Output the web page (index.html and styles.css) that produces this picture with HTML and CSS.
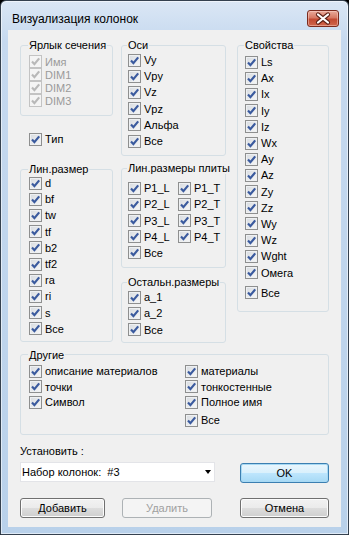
FILE: index.html
```html
<!DOCTYPE html>
<html>
<head>
    <title>Визуализация колонок</title>
    <link rel="stylesheet" href="styles.css">
</head>
<body>
    <svg width="0" height="0" class="defs">
        <symbol id="tick" viewBox="0 0 11 11">
            <path d="M2 5.6 L4.4 8.2 L9.2 2.4" fill="none" stroke="currentColor" stroke-width="2.2"/>
        </symbol>
    </svg>

    <div class="window">
        <div class="titlebar">
            <span class="title">Визуализация колонок</span>
            <span class="close">
                <svg width="30" height="15" viewBox="0 0 30 15">
                    <path d="M10 3.5 L20 11.5 M20 3.5 L10 11.5" stroke="#5b2016" stroke-width="4.2" stroke-linecap="round"/>
                    <path d="M10 3.5 L20 11.5 M20 3.5 L10 11.5" stroke="#fff" stroke-width="2.2" stroke-linecap="round"/>
                </svg>
            </span>
        </div>

        <div class="client">
            <div class="columns">
                <div class="col col1">
                    <fieldset class="grp g-label">
                        <legend>Ярлык сечения</legend>
                        <div class="cb small off"><span class="box"><svg><use href="#tick"/></svg></span>Имя</div>
                        <div class="cb small off"><span class="box"><svg><use href="#tick"/></svg></span>DIM1</div>
                        <div class="cb small off"><span class="box"><svg><use href="#tick"/></svg></span>DIM2</div>
                        <div class="cb small off"><span class="box"><svg><use href="#tick"/></svg></span>DIM3</div>
                    </fieldset>

                    <div class="cb tip"><span class="box"><svg><use href="#tick"/></svg></span>Тип</div>

                    <fieldset class="grp g-lin">
                        <legend>Лин.размер</legend>
                        <div class="cb"><span class="box"><svg><use href="#tick"/></svg></span>d</div>
                        <div class="cb"><span class="box"><svg><use href="#tick"/></svg></span>bf</div>
                        <div class="cb"><span class="box"><svg><use href="#tick"/></svg></span>tw</div>
                        <div class="cb"><span class="box"><svg><use href="#tick"/></svg></span>tf</div>
                        <div class="cb"><span class="box"><svg><use href="#tick"/></svg></span>b2</div>
                        <div class="cb"><span class="box"><svg><use href="#tick"/></svg></span>tf2</div>
                        <div class="cb"><span class="box"><svg><use href="#tick"/></svg></span>ra</div>
                        <div class="cb"><span class="box"><svg><use href="#tick"/></svg></span>ri</div>
                        <div class="cb"><span class="box"><svg><use href="#tick"/></svg></span>s</div>
                        <div class="cb"><span class="box"><svg><use href="#tick"/></svg></span>Все</div>
                    </fieldset>
                </div>

                <div class="col col2">
                    <fieldset class="grp g-axes">
                        <legend>Оси</legend>
                        <div class="cb"><span class="box"><svg><use href="#tick"/></svg></span>Vy</div>
                        <div class="cb"><span class="box"><svg><use href="#tick"/></svg></span>Vpy</div>
                        <div class="cb"><span class="box"><svg><use href="#tick"/></svg></span>Vz</div>
                        <div class="cb"><span class="box"><svg><use href="#tick"/></svg></span>Vpz</div>
                        <div class="cb"><span class="box"><svg><use href="#tick"/></svg></span>Альфа</div>
                        <div class="cb"><span class="box"><svg><use href="#tick"/></svg></span>Все</div>
                    </fieldset>

                    <fieldset class="grp g-plate">
                        <legend>Лин.размеры плиты</legend>
                        <div class="plate-grid">
                            <div class="cb"><span class="box"><svg><use href="#tick"/></svg></span>P1_L</div>
                            <div class="cb"><span class="box"><svg><use href="#tick"/></svg></span>P1_T</div>
                            <div class="cb"><span class="box"><svg><use href="#tick"/></svg></span>P2_L</div>
                            <div class="cb"><span class="box"><svg><use href="#tick"/></svg></span>P2_T</div>
                            <div class="cb"><span class="box"><svg><use href="#tick"/></svg></span>P3_L</div>
                            <div class="cb"><span class="box"><svg><use href="#tick"/></svg></span>P3_T</div>
                            <div class="cb"><span class="box"><svg><use href="#tick"/></svg></span>P4_L</div>
                            <div class="cb"><span class="box"><svg><use href="#tick"/></svg></span>P4_T</div>
                            <div class="cb"><span class="box"><svg><use href="#tick"/></svg></span>Все</div>
                        </div>
                    </fieldset>

                    <fieldset class="grp g-rest">
                        <legend>Остальн.размеры</legend>
                        <div class="cb"><span class="box"><svg><use href="#tick"/></svg></span>a_1</div>
                        <div class="cb"><span class="box"><svg><use href="#tick"/></svg></span>a_2</div>
                        <div class="cb"><span class="box"><svg><use href="#tick"/></svg></span>Все</div>
                    </fieldset>
                </div>

                <div class="col col3">
                    <fieldset class="grp g-props">
                        <legend>Свойства</legend>
                        <div class="cb"><span class="box"><svg><use href="#tick"/></svg></span>Ls</div>
                        <div class="cb"><span class="box"><svg><use href="#tick"/></svg></span>Ax</div>
                        <div class="cb"><span class="box"><svg><use href="#tick"/></svg></span>Ix</div>
                        <div class="cb"><span class="box"><svg><use href="#tick"/></svg></span>Iy</div>
                        <div class="cb"><span class="box"><svg><use href="#tick"/></svg></span>Iz</div>
                        <div class="cb"><span class="box"><svg><use href="#tick"/></svg></span>Wx</div>
                        <div class="cb"><span class="box"><svg><use href="#tick"/></svg></span>Ay</div>
                        <div class="cb"><span class="box"><svg><use href="#tick"/></svg></span>Az</div>
                        <div class="cb"><span class="box"><svg><use href="#tick"/></svg></span>Zy</div>
                        <div class="cb"><span class="box"><svg><use href="#tick"/></svg></span>Zz</div>
                        <div class="cb"><span class="box"><svg><use href="#tick"/></svg></span>Wy</div>
                        <div class="cb"><span class="box"><svg><use href="#tick"/></svg></span>Wz</div>
                        <div class="cb"><span class="box"><svg><use href="#tick"/></svg></span>Wght</div>
                        <div class="cb"><span class="box"><svg><use href="#tick"/></svg></span>Омега</div>
                        <div class="cb all"><span class="box"><svg><use href="#tick"/></svg></span>Все</div>
                    </fieldset>
                </div>
            </div>

            <fieldset class="grp g-other">
                <legend>Другие</legend>
                <div class="other-cols">
                    <div class="other-left">
                        <div class="cb mid"><span class="box"><svg><use href="#tick"/></svg></span>описание материалов</div>
                        <div class="cb mid"><span class="box"><svg><use href="#tick"/></svg></span>точки</div>
                        <div class="cb mid"><span class="box"><svg><use href="#tick"/></svg></span>Символ</div>
                    </div>
                    <div class="other-right">
                        <div class="cb mid"><span class="box"><svg><use href="#tick"/></svg></span>материалы</div>
                        <div class="cb mid"><span class="box"><svg><use href="#tick"/></svg></span>тонкостенные</div>
                        <div class="cb mid"><span class="box"><svg><use href="#tick"/></svg></span>Полное имя</div>
                        <div class="cb mid all2"><span class="box"><svg><use href="#tick"/></svg></span>Все</div>
                    </div>
                </div>
            </fieldset>

            <div class="set-label">Установить :</div>
            <div class="set-row">
                <div class="combo">
                    <span class="combo-text">Набор колонок:  #3</span>
                    <span class="arrow"></span>
                </div>
                <button class="btn btn-default">OK</button>
            </div>

            <div class="btn-row">
                <button class="btn btn-add">Добавить</button>
                <button class="btn btn-del" disabled>Удалить</button>
                <button class="btn btn-cancel">Отмена</button>
            </div>
        </div>
    </div>
</body>
</html>
```

FILE: styles.css
```css
:root {
    --frame: #b9d1ea;
    --client: #f0f0f0;
    --group-border: #d5dfe5;
    --tick: #3a5a9e;
    --tick-off: #b8b8b8;
    --text-off: #9a9a9a;
}

* { box-sizing: border-box; }

html, body {
    margin: 0;
    padding: 0;
    background: #000;
}

body {
    font-family: "Liberation Sans", Arial, sans-serif;
    font-size: 11px;
    color: #000;
}

.defs {
    position: absolute;
}

.window {
    width: 349px;
    height: 535px;
    border: 1px solid #35414f;
    border-radius: 6px 6px 0 0;
    background: linear-gradient(#dbe7f5, #c6d9ef 40px, var(--frame));
    box-shadow: inset 0 0 0 1px rgba(255, 255, 255, 0.55);
    display: flex;
    flex-direction: column;
}

/* title bar */
.titlebar {
    height: 29px;
    display: flex;
    justify-content: space-between;
    align-items: flex-start;
    padding: 0 9px 0 11px;
}

.title {
    margin-top: 10px;
    font-size: 12px;
    line-height: 16px;
}

.close {
    margin-top: 9px;
    width: 32px;
    height: 17px;
    border: 1px solid #7b2b1e;
    border-radius: 3px;
    background: linear-gradient(#e9ab9b 0%, #d77964 45%, #c24a32 55%, #d0664c 100%);
    box-shadow: inset 0 0 0 1px rgba(255, 220, 210, 0.45);
    display: flex;
    align-items: center;
    justify-content: center;
}

/* client area */
.client {
    margin: 0 7px;
    width: 333px;
    height: 497px;
    background: var(--client);
    padding: 9px 12px 0 12px;
    display: flex;
    flex-direction: column;
}

.columns {
    display: flex;
    align-items: flex-start;
}

.col1 { width: 93px; }
.col2 { width: 105px; margin-left: 8px; }
.col3 { width: 92px; margin-left: 11px; }

.grp {
    margin: 0;
    min-width: 0;
    border: 1px solid var(--group-border);
    border-radius: 3px;
}

legend {
    padding: 0 1px;
    margin-left: -1px;
    line-height: 12px;
    white-space: nowrap;
}

.g-label { padding: 4px 8px 8px; }
.g-lin { padding: 0 8px 4px; margin-top: 16px; }
.g-axes { padding: 1px 6px 6px; }
.g-plate { padding: 6px 6px 6px; margin-top: 6px; }
.g-rest { padding: 1px 6px 4px; margin-top: 8px; }
.g-props { padding: 3px 7px 10px; }
.g-other { padding: 3px 8px 6px; margin-top: 6px; }

.plate-grid {
    display: grid;
    grid-template-columns: 50px auto;
}

.other-cols {
    display: flex;
}

.other-left { width: 156px; }

/* checkbox rows */
.cb {
    display: flex;
    align-items: center;
    height: 16.2px;
    white-space: nowrap;
}

.cb.small { height: 13px; }
.cb.mid { height: 15.5px; }
.cb.all { margin-top: 4px; }
.cb.all2 { margin-top: 2.5px; }

.tip {
    margin-top: 15px;
    padding-left: 9px;
    height: 16px;
}

.box {
    width: 13px;
    height: 13px;
    margin-right: 3px;
    flex: none;
    border: 1px solid #8e8f8f;
    background: linear-gradient(135deg, #d7dbe0, #f7f7f7);
    box-shadow: inset 0 0 0 1px #eef0f2;
    color: var(--tick);
    display: flex;
}

.box svg {
    width: 11px;
    height: 11px;
}

.cb.off { color: var(--text-off); }

.cb.off .box {
    border-color: #c3c3c3;
    background: #f4f4f4;
    box-shadow: none;
    color: var(--tick-off);
}

/* bottom controls */
.set-label {
    margin-top: 10px;
    line-height: 13px;
}

.set-row {
    display: flex;
    align-items: flex-start;
    margin-top: 4px;
    height: 21px;
}

.combo {
    width: 195px;
    height: 20px;
    background: #fff;
    border: 1px solid #e3e4e8;
    padding: 0 3px 0 1px;
    display: flex;
    align-items: center;
    justify-content: space-between;
}

.combo-text {
    white-space: pre;
}

.arrow {
    width: 0;
    height: 0;
    border-top: 4px solid #000;
    border-left: 3.5px solid transparent;
    border-right: 3.5px solid transparent;
}

.btn {
    height: 20px;
    padding: 0;
    font-family: inherit;
    font-size: 11px;
    color: #000;
    border: 1px solid #707070;
    border-radius: 3px;
    background: linear-gradient(#f2f2f2 0%, #ebebeb 50%, #dddddd 50%, #cfcfcf 100%);
    box-shadow: inset 0 0 0 1px #fcfcfc;
}

.btn-default {
    width: 89px;
    margin-left: auto;
    margin-top: 1px;
    border-color: #3c7fb1;
    background: linear-gradient(#eaf6fd 0%, #d9f0fc 50%, #bee6fd 50%, #a7d9f5 100%);
    box-shadow: inset 0 0 0 1px #a8d9f3;
}

.btn-row {
    display: flex;
    margin-top: 15px;
}

.btn-add { width: 85px; }

.btn-del {
    width: 90px;
    margin-left: 17px;
    color: #a0a0a0;
    border-color: #adb2b5;
    background: #f4f4f4;
    box-shadow: none;
}

.btn-cancel {
    width: 89px;
    margin-left: auto;
}
```
